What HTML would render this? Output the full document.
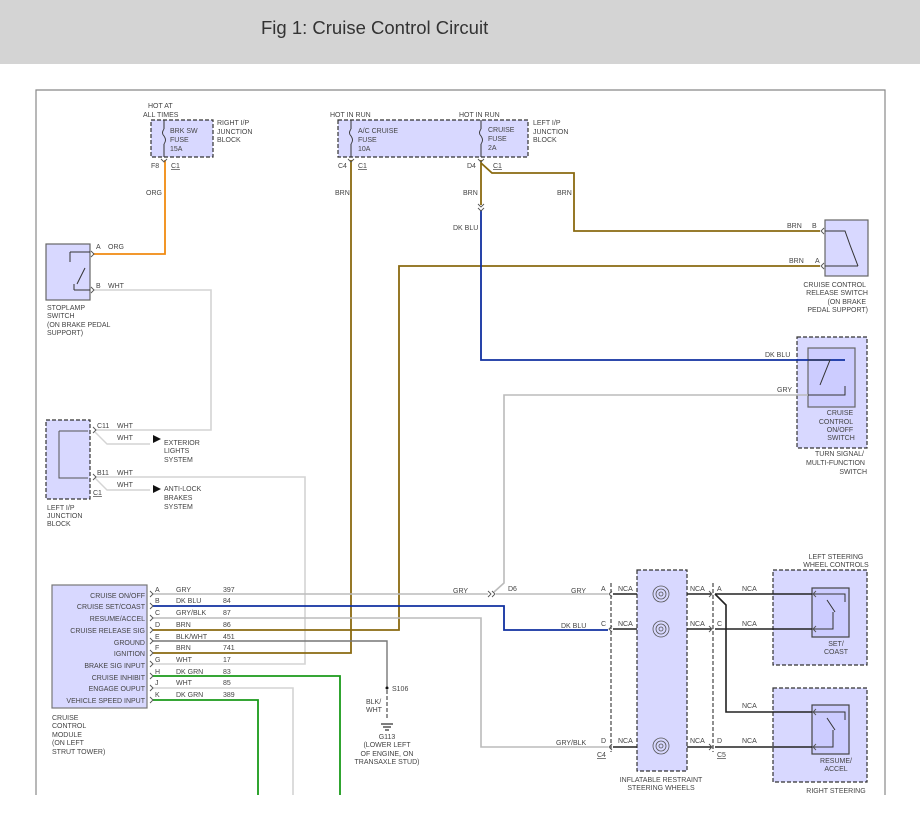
<!DOCTYPE html>
<html><head><meta charset="utf-8"><style>
html,body{margin:0;padding:0;background:#fff;width:920px;height:820px;overflow:hidden}
.hdr{position:absolute;left:0;top:0;width:920px;height:64px;background:#d4d4d4}
.ttl{position:absolute;left:261px;top:17px;font:18.5px "Liberation Sans",sans-serif;color:#333}
svg{position:absolute;left:0;top:0}
text{font-family:"Liberation Sans",sans-serif;font-size:7px;fill:#444}
.e{text-anchor:end}.m{text-anchor:middle}
</style></head><body>
<div class="hdr"></div><div class="ttl">Fig 1: Cruise Control Circuit</div>
<svg width="920" height="820" viewBox="0 0 920 820">
<path d="M36,795V90H885V795" fill="none" stroke="#888" stroke-width="1.2"/>
<g fill="#d8d8ff" stroke="#333" stroke-width="1.2">
<rect x="151" y="120" width="62" height="37" stroke-dasharray="4,2"/>
<rect x="338" y="120" width="190" height="37" stroke-dasharray="4,2"/>
<rect x="46" y="244" width="44" height="56" stroke="#666"/>
<rect x="46" y="420" width="44" height="79" stroke-dasharray="4,2"/>
<rect x="825" y="220" width="43" height="56" stroke="#666"/>
<rect x="797" y="337" width="70" height="111" stroke-dasharray="4,2"/>
<rect x="808" y="348" width="47" height="59" stroke="#666" fill="#ccccff"/>
<rect x="52" y="585" width="95" height="123" stroke="#777"/>
<rect x="637" y="570" width="50" height="201" stroke-dasharray="4,2"/>
<rect x="773" y="570" width="94" height="95" stroke-dasharray="4,2"/>
<rect x="773" y="688" width="94" height="94" stroke-dasharray="4,2"/>
<rect x="812" y="588" width="37" height="49" stroke="#444" fill="#ccccff"/>
<rect x="812" y="705" width="37" height="49" stroke="#444" fill="#ccccff"/>
</g>
<g fill="none" stroke-width="1.3">
<path d="M165,160V254H93" stroke="#f08a10" stroke-width="1.8"/>
<path d="M93,290H211V430H95" stroke="#d4d4d4" stroke-width="1.6"/>
<path d="M95,432L107,444H150M95,478L107,490H150" stroke="#d4d4d4" stroke-width="1.4"/>
<path d="M95,477H305V664H153" stroke="#d4d4d4" stroke-width="1.6"/>
<path d="M351,160V653H153" stroke="#8a6a10" stroke-width="1.8"/>
<path d="M481,160V205" stroke="#8a6a10" stroke-width="1.8"/>
<path d="M481,163L492,173H574V231H820" stroke="#8a6a10" stroke-width="1.8"/>
<path d="M820,266H399V630H153" stroke="#8a6a10" stroke-width="1.8"/>
<path d="M481,210V360H845" stroke="#1030a0" stroke-width="1.8"/>
<path d="M808,395H504V583L494,592" stroke="#bbb" stroke-width="1.6"/>
<path d="M153,594H488M496,594H608" stroke="#bbb" stroke-width="1.6"/>
<path d="M153,606H504V630H608" stroke="#1030a0" stroke-width="1.8"/>
<path d="M153,618H481V747H608" stroke="#bbb" stroke-width="1.6"/>
<path d="M153,641H387V688" stroke="#777" stroke-width="1.4"/>
<path d="M387,690V720" stroke="#666" stroke-width="1.4" stroke-dasharray="4,2"/>
<path d="M153,676H340V795M153,700H258V795" stroke="#1a9a1a" stroke-width="1.8"/>
<path d="M153,688H293V795" stroke="#d4d4d4" stroke-width="1.6"/>
<path d="M613,594H637M613,629H637M613,747H637M687,594H711M687,629H711M687,747H711M715,594H812M715,629H812M715,747H812M715,594L726,605V712H812" stroke="#222" stroke-width="1.6"/>
<path d="M611,583V752M713,583V752" stroke="#333" stroke-dasharray="4,2" stroke-width="1.1"/>
<path d="M164,120V129M164,144V157M351,120V129M351,144V157M481,120V129M481,144V157" stroke="#333" stroke-width="1"/>
<path d="M164,129q-3,4 0,7q3,4 0,8M351,129q-3,4 0,7q3,4 0,8M481,129q-3,4 0,7q3,4 0,8" stroke="#333" stroke-width="0.9"/>
<path d="M70,252H90M70,252V262M85,268L77,284M74,290H90M74,284V290" stroke="#333" stroke-width="1"/>
<path d="M59,431H88M59,431V478H88" stroke="#555" stroke-width="1"/>
<path d="M825,231H845L850,245L858,266M858,266H825" stroke="#333" stroke-width="1"/>
<path d="M808,360H830L820,385M845,386V395H808" stroke="#333" stroke-width="1"/>
<path d="M812,594H845V602M835,612L827,600M812,629H833V612" stroke="#333" stroke-width="1"/>
<path d="M812,712H845V720M835,730L827,718M812,747H833V730" stroke="#333" stroke-width="1"/>
<path d="M381,724H393M383,727H391M385,730H389" stroke="#333"/>
<path stroke="#555" stroke-width="0.9" d="M91,251l3,3-3,3M91,287l3,3-3,3M93,427l3,3-3,3M93,474l3,3-3,3M150,591l3,3-3,3M150,603l3,3-3,3M150,615l3,3-3,3M150,627l3,3-3,3M150,638l3,3-3,3M150,650l3,3-3,3M150,661l3,3-3,3M150,673l3,3-3,3M150,685l3,3-3,3M150,697l3,3-3,3M824,228l-3,3 3,3M824,263l-3,3 3,3M161,159l3,3 3,-3M348,159l3,3 3,-3M478,159l3,3 3,-3M478,204l3,3 3,-3M478,208l3,3 3,-3M488,591l3,3-3,3M492,591l3,3-3,3M612,591l-3,3 3,3M612,626l-3,3 3,3M612,744l-3,3 3,3M709,591l3,3-3,3M709,626l3,3-3,3M709,744l3,3-3,3M816,591l-3,3 3,3M816,626l-3,3 3,3M816,709l-3,3 3,3M816,744l-3,3 3,3"/>
</g>
<g fill="none" stroke="#555" stroke-width="0.8">
<circle cx="661" cy="594" r="8"/><circle cx="661" cy="594" r="5"/><circle cx="661" cy="594" r="2"/>
<circle cx="661" cy="629" r="8"/><circle cx="661" cy="629" r="5"/><circle cx="661" cy="629" r="2"/>
<circle cx="661" cy="746" r="8"/><circle cx="661" cy="746" r="5"/><circle cx="661" cy="746" r="2"/>
</g>
<g fill="#111"><path d="M153,435l8,4-8,4zM153,485l8,4-8,4z"/><circle cx="387" cy="688" r="1.5"/></g>
<text x="148" y="108">HOT AT</text><text x="143" y="117">ALL TIMES</text>
<text x="170" y="133">BRK SW</text><text x="170" y="142">FUSE</text><text x="170" y="151">15A</text>
<text x="217" y="125">RIGHT I/P</text><text x="217" y="134">JUNCTION</text><text x="217" y="142">BLOCK</text>
<text x="151" y="168">F8</text><text x="171" y="168" text-decoration="underline">C1</text>
<text x="146" y="195">ORG</text><text x="96" y="249">A</text><text x="108" y="249">ORG</text>
<text x="96" y="288">B</text><text x="108" y="288">WHT</text>
<text x="47" y="310">STOPLAMP</text><text x="47" y="318">SWITCH</text><text x="47" y="327">(ON BRAKE PEDAL</text><text x="47" y="335">SUPPORT)</text>
<text x="97" y="428">C11</text><text x="117" y="428">WHT</text><text x="117" y="440">WHT</text>
<text x="164" y="445">EXTERIOR</text><text x="164" y="453">LIGHTS</text><text x="164" y="462">SYSTEM</text>
<text x="97" y="475">B11</text><text x="117" y="475">WHT</text><text x="117" y="487">WHT</text>
<text x="164" y="491">ANTI-LOCK</text><text x="164" y="500">BRAKES</text><text x="164" y="509">SYSTEM</text>
<text x="93" y="495" text-decoration="underline">C1</text>
<text x="47" y="510">LEFT I/P</text><text x="47" y="518">JUNCTION</text><text x="47" y="526">BLOCK</text>
<text x="330" y="117">HOT IN RUN</text><text x="459" y="117">HOT IN RUN</text>
<text x="358" y="133">A/C CRUISE</text><text x="358" y="142">FUSE</text><text x="358" y="151">10A</text>
<text x="488" y="132">CRUISE</text><text x="488" y="141">FUSE</text><text x="488" y="150">2A</text>
<text x="533" y="125">LEFT I/P</text><text x="533" y="134">JUNCTION</text><text x="533" y="142">BLOCK</text>
<text x="338" y="168">C4</text><text x="358" y="168" text-decoration="underline">C1</text>
<text x="467" y="168">D4</text><text x="493" y="168" text-decoration="underline">C1</text>
<text x="335" y="195">BRN</text><text x="463" y="195">BRN</text><text x="557" y="195">BRN</text><text x="453" y="230">DK BLU</text>
<text x="787" y="228">BRN</text><text x="812" y="228">B</text><text x="789" y="263">BRN</text><text x="815" y="263">A</text>
<text class="e" x="866" y="287">CRUISE CONTROL</text><text class="e" x="868" y="295">RELEASE SWITCH</text><text class="e" x="866" y="304">(ON BRAKE</text><text class="e" x="868" y="312">PEDAL SUPPORT)</text>
<text x="765" y="357">DK BLU</text><text x="777" y="392">GRY</text>
<text class="m" x="840" y="415">CRUISE</text><text class="m" x="836" y="424">CONTROL</text><text class="m" x="840" y="432">ON/OFF</text><text class="m" x="841" y="440">SWITCH</text>
<text class="e" x="864" y="456">TURN SIGNAL/</text><text class="e" x="865" y="465">MULTI-FUNCTION</text><text class="e" x="867" y="474">SWITCH</text>
<text class="e" x="145" y="598">CRUISE ON/OFF</text><text class="e" x="145" y="609">CRUISE SET/COAST</text><text class="e" x="145" y="621">RESUME/ACCEL</text><text class="e" x="145" y="633">CRUISE RELEASE SIG</text><text class="e" x="145" y="645">GROUND</text><text class="e" x="145" y="656">IGNITION</text><text class="e" x="145" y="668">BRAKE SIG INPUT</text><text class="e" x="145" y="680">CRUISE INHIBIT</text><text class="e" x="145" y="691">ENGAGE OUPUT</text><text class="e" x="145" y="703">VEHICLE SPEED INPUT</text>
<text x="155" y="592">A</text><text x="176" y="592">GRY</text><text x="223" y="592">397</text>
<text x="155" y="603">B</text><text x="176" y="603">DK BLU</text><text x="223" y="603">84</text>
<text x="155" y="615">C</text><text x="176" y="615">GRY/BLK</text><text x="223" y="615">87</text>
<text x="155" y="627">D</text><text x="176" y="627">BRN</text><text x="223" y="627">86</text>
<text x="155" y="639">E</text><text x="176" y="639">BLK/WHT</text><text x="223" y="639">451</text>
<text x="155" y="650">F</text><text x="176" y="650">BRN</text><text x="223" y="650">741</text>
<text x="155" y="662">G</text><text x="176" y="662">WHT</text><text x="223" y="662">17</text>
<text x="155" y="674">H</text><text x="176" y="674">DK GRN</text><text x="223" y="674">83</text>
<text x="155" y="685">J</text><text x="176" y="685">WHT</text><text x="223" y="685">85</text>
<text x="155" y="697">K</text><text x="176" y="697">DK GRN</text><text x="223" y="697">389</text>
<text x="52" y="720">CRUISE</text><text x="52" y="728">CONTROL</text><text x="52" y="737">MODULE</text><text x="52" y="745">(ON LEFT</text><text x="52" y="754">STRUT TOWER)</text>
<text x="392" y="691">S106</text><text x="366" y="704">BLK/</text><text x="366" y="712">WHT</text>
<text class="m" x="387" y="739">G113</text><text class="m" x="387" y="747">(LOWER LEFT</text><text class="m" x="387" y="756">OF ENGINE, ON</text><text class="m" x="387" y="764">TRANSAXLE STUD)</text>
<text x="453" y="593">GRY</text><text x="508" y="591">D6</text><text x="571" y="593">GRY</text><text x="601" y="591">A</text>
<text x="561" y="628">DK BLU</text><text x="601" y="626">C</text>
<text x="556" y="745">GRY/BLK</text><text x="601" y="743">D</text><text x="597" y="757" text-decoration="underline">C4</text>
<text x="618" y="591">NCA</text><text x="618" y="626">NCA</text><text x="618" y="743">NCA</text>
<text x="690" y="591">NCA</text><text x="690" y="626">NCA</text><text x="690" y="743">NCA</text>
<text x="717" y="591">A</text><text x="717" y="626">C</text><text x="717" y="743">D</text><text x="717" y="757" text-decoration="underline">C5</text>
<text x="742" y="591">NCA</text><text x="742" y="626">NCA</text><text x="742" y="708">NCA</text><text x="742" y="743">NCA</text>
<text class="m" x="836" y="559">LEFT STEERING</text><text class="m" x="836" y="567">WHEEL CONTROLS</text>
<text class="m" x="836" y="646">SET/</text><text class="m" x="836" y="654">COAST</text>
<text class="m" x="836" y="763">RESUME/</text><text class="m" x="836" y="771">ACCEL</text>
<text class="m" x="836" y="793">RIGHT STEERING</text>
<text class="m" x="661" y="782">INFLATABLE RESTRAINT</text><text class="m" x="661" y="790">STEERING WHEELS</text>
</svg>
</body></html>
